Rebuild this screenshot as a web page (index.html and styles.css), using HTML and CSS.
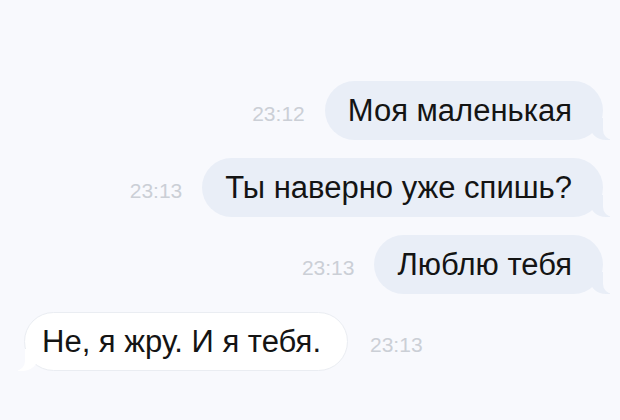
FILE: index.html
```html
<!DOCTYPE html>
<html lang="ru">
<head>
    <meta charset="UTF-8">
    <meta name="viewport" content="width=device-width, initial-scale=1.0">
    <title>Сообщения</title>
    <link rel="stylesheet" href="styles.css">
</head>
<body>
    <!-- Chat thread -->
    <div class="thread">
        <div class="row row-out">
            <span class="time">23:12</span>
            <div class="bubble bubble-out">Моя маленькая</div>
        </div>
        <div class="row row-out">
            <span class="time">23:13</span>
            <div class="bubble bubble-out">Ты наверно уже спишь?</div>
        </div>
        <div class="row row-out">
            <span class="time">23:13</span>
            <div class="bubble bubble-out">Люблю тебя</div>
        </div>
        <div class="row row-in">
            <div class="bubble bubble-in">Не, я жру. И я тебя.</div>
            <span class="time">23:13</span>
        </div>
    </div>
</body>
</html>
```

FILE: styles.css
```css
/* Basic page styles */
html, body {
    margin: 0;
    padding: 0;
    width: 100%;
    height: 100%;
    overflow: hidden;
    background-color: #f8f9fd;
    font-family: "Liberation Sans", Arial, sans-serif;
}

.thread {
    display: flex;
    flex-direction: column;
    gap: 18px;
    padding: 81px 17px 0 24px;
}

.row {
    display: flex;
    align-items: center;
    gap: 20px;
}

.row-out {
    justify-content: flex-end;
}

.row-in {
    justify-content: flex-start;
    gap: 22px;
}

.time {
    font-size: 21px;
    color: #cbcfd6;
    padding-top: 6px;
}

.bubble {
    position: relative;
    height: 59px;
    display: flex;
    align-items: center;
    border-radius: 30px;
    font-size: 31px;
    color: #141414;
    box-sizing: border-box;
}

.bubble-out {
    background-color: #e9eef7;
    padding: 0 31px 0 23px;
}

.bubble-in {
    background-color: #ffffff;
    border: 1px solid #eaedf2;
    padding: 0 26px 0 17px;
}

/* Tail on the sent bubbles */
.bubble-out::before {
    content: "";
    position: absolute;
    bottom: 0;
    right: -7px;
    width: 20px;
    height: 22px;
    background-color: #e9eef7;
    border-bottom-left-radius: 16px 14px;
}

.bubble-out::after {
    content: "";
    position: absolute;
    bottom: 0;
    right: -26px;
    width: 26px;
    height: 22px;
    background-color: #f8f9fd;
    border-bottom-left-radius: 10px;
}

/* Tail on the received bubble */
.bubble-in::before {
    content: "";
    position: absolute;
    bottom: -1px;
    left: -7px;
    width: 20px;
    height: 22px;
    background-color: #ffffff;
    border-bottom-right-radius: 16px 14px;
}

.bubble-in::after {
    content: "";
    position: absolute;
    bottom: -1px;
    left: -26px;
    width: 26px;
    height: 22px;
    background-color: #f8f9fd;
    border-bottom-right-radius: 10px;
}
```
